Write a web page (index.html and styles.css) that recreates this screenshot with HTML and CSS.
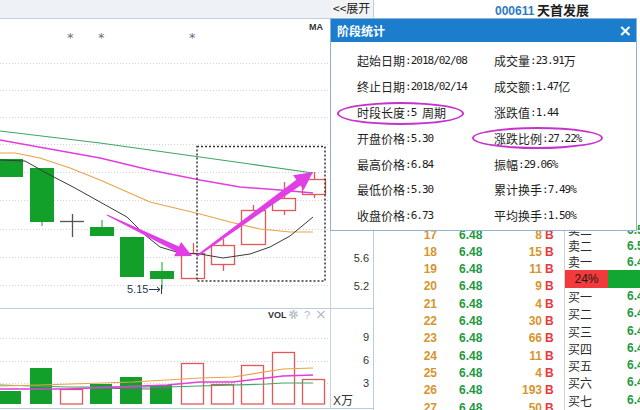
FILE: index.html
```html
<!DOCTYPE html>
<html lang="zh-CN">
<head>
<meta charset="utf-8">
<title>阶段统计</title>
<link rel="stylesheet" href="styles.css">
</head>
<body>
<div class="app">
  <div class="left">
    <div class="topbar">
      <div class="topfill"></div>
      <div class="expand">&lt;&lt;展开</div>
    </div>
    <div class="pane price">
      <div class="chart">
        <svg class="plot" width="330" height="289" viewBox="0 19 330 289">
          <g class="grid">
            <line x1="0" x2="330" y1="63.5" y2="63.5"/>
            <line x1="0" x2="330" y1="90.5" y2="90.5"/>
            <line x1="0" x2="330" y1="117.5" y2="117.5"/>
            <line x1="0" x2="330" y1="144.5" y2="144.5"/>
            <line x1="0" x2="330" y1="172.5" y2="172.5"/>
            <line x1="0" x2="330" y1="200.5" y2="200.5"/>
            <line x1="0" x2="330" y1="229.5" y2="229.5"/>
            <line x1="0" x2="330" y1="257.5" y2="257.5"/>
            <line x1="0" x2="330" y1="285.5" y2="285.5"/>
          </g>
          <g class="marks">
            <text x="67" y="42">*</text>
            <text x="98" y="42">*</text>
            <text x="189" y="42">*</text>
          </g>
          <text class="ma-label" x="309" y="30">MA</text>
          <g class="down">
            <rect x="0" y="159" width="23" height="18"/>
            <line x1="42" x2="42" y1="221" y2="226"/>
            <rect x="30" y="168" width="24" height="54"/>
            <line x1="102" x2="102" y1="220" y2="228"/>
            <rect x="90" y="227" width="24" height="9"/>
            <rect x="120" y="237" width="24" height="40"/>
            <line x1="162" x2="162" y1="262" y2="289"/>
            <rect x="150" y="271" width="24" height="8"/>
          </g>
          <g class="doji">
            <line x1="60" x2="84" y1="221.5" y2="221.5"/>
            <line x1="72.5" x2="72.5" y1="214" y2="237"/>
          </g>
          <g class="up">
            <line x1="193.5" x2="193.5" y1="243" y2="253.5"/>
            <rect x="181.5" y="253.5" width="23" height="25"/>
            <line x1="223.5" x2="223.5" y1="239" y2="245.5"/>
            <line x1="223.5" x2="223.5" y1="264.5" y2="271"/>
            <rect x="211.5" y="245.5" width="23" height="19"/>
            <line x1="253.5" x2="253.5" y1="205" y2="210.5"/>
            <rect x="241.5" y="210.5" width="24" height="34"/>
            <line x1="284.5" x2="284.5" y1="182" y2="198.5"/>
            <line x1="284.5" x2="284.5" y1="210.5" y2="215"/>
            <rect x="272.5" y="198.5" width="23" height="12"/>
            <line x1="314.5" x2="314.5" y1="172" y2="179.5"/>
            <line x1="314.5" x2="314.5" y1="194.5" y2="198"/>
            <rect x="302.5" y="179.5" width="23" height="15"/>
          </g>
          <polyline class="ma ma-green" points="0,131 50,137 100,143 150,150 200,157 250,164 313,173"/>
          <polyline class="ma ma-pink" points="0,140 50,149 100,158 150,170 200,180 240,187 280,190 313,193"/>
          <polyline class="ma ma-orange" points="0,153 15,153 40,158 70,168 100,180 150,202 200,214 230,222 260,229 290,232 313,232"/>
          <polyline class="ma ma-black" points="0,160 25,161 50,175 75,188 100,202 127,217 145,235 160,247 180,253 200,254 223,258 250,254 270,247 290,236 313,217"/>
          <rect class="range" x="197" y="146.5" width="128" height="134.5"/>
          <polygon class="arrow" points="107.2,214.5 178.9,246.4 181.1,241.9 192,256 174.1,256.3 176.3,251.8 106.8,215.5"/>
          <polygon class="arrow" points="197.5,256.7 300.5,185.4 303.7,189.9 313,172 293.1,175.3 296.4,179.8 196.5,255.3"/>
          <text class="low" x="127" y="293">5.15</text>
          <line class="low-arrow" x1="149" x2="160" y1="289.5" y2="289.5"/>
          <polyline class="low-arrow" points="157,287 160,289.5 157,292"/>
          <line class="low-arrow" x1="161.5" x2="161.5" y1="285" y2="294"/>
        </svg>
      </div>
      <div class="axis axis-price">
        <span>5.6</span>
        <span>5.2</span>
      </div>
    </div>
    <div class="pane vol">
      <div class="chart">
        <svg class="plot" width="330" height="99" viewBox="0 309 330 99">
          <g class="grid">
            <line x1="0" x2="330" y1="338.5" y2="338.5"/>
            <line x1="0" x2="330" y1="361.5" y2="361.5"/>
            <line x1="0" x2="330" y1="383.5" y2="383.5"/>
          </g>
          <text class="vol-label" x="268" y="318">VOL</text>
          <g class="tool">
            <circle class="gear" cx="293.5" cy="314.5" r="3.2"/>
            <circle class="gear-hub" cx="293.5" cy="314.5" r="2.2"/>
            <circle class="gear-eye" cx="293.5" cy="314.5" r="0.9"/>
            <text x="304" y="318.5">?</text>
            <path class="tool-x" d="M317.5 311 L324.5 318 M324.5 311 L317.5 318"/>
          </g>
          <g class="down">
            <rect x="0" y="391" width="21" height="13"/>
            <rect x="30" y="368" width="22" height="36"/>
            <rect x="90" y="384" width="22" height="20"/>
            <rect x="120" y="377" width="22" height="27"/>
            <rect x="150" y="385" width="22" height="19"/>
          </g>
          <g class="up">
            <rect x="60.5" y="389.5" width="22" height="14.5"/>
            <rect x="181.5" y="363.5" width="22" height="40.5"/>
            <rect x="211.5" y="384.5" width="22" height="19.5"/>
            <rect x="241.5" y="365.5" width="22" height="38.5"/>
            <rect x="272.5" y="352.5" width="22" height="51.5"/>
            <rect x="302.5" y="379.5" width="22" height="24.5"/>
          </g>
          <polyline class="ma ma-grey" points="90,388 120,388.5 150,389 170,388"/>
          <polyline class="ma ma-green" points="0,385 67,387 167,387 200,386 267,384 283,383 313,383"/>
          <polyline class="ma ma-pink" points="0,389 67,389 167,385 200,382 233,382 283,376 313,375"/>
          <polyline class="ma ma-orange" points="0,386 40,385 133,382 200,378 233,377 283,369 313,368"/>
        </svg>
      </div>
      <div class="axis axis-vol">
        <span>9</span>
        <span>6</span>
        <span>3</span>
        <span class="unit">X万</span>
      </div>
    </div>
  </div>

  <div class="right">
    <div class="title"><b class="code">000611</b> <b class="name">天首发展</b></div>
    <div class="body">
      <div class="ticks">
        <div class="tick"><span class="i">17</span><span class="p">6.48</span><span class="v">8</span><span class="b">B</span></div>
        <div class="tick"><span class="i">18</span><span class="p">6.48</span><span class="v">15</span><span class="b">B</span></div>
        <div class="tick"><span class="i">19</span><span class="p">6.48</span><span class="v">11</span><span class="b">B</span></div>
        <div class="tick"><span class="i">20</span><span class="p">6.48</span><span class="v">9</span><span class="b">B</span></div>
        <div class="tick"><span class="i">21</span><span class="p">6.48</span><span class="v">4</span><span class="b">B</span></div>
        <div class="tick"><span class="i">22</span><span class="p">6.48</span><span class="v">30</span><span class="b">B</span></div>
        <div class="tick"><span class="i">23</span><span class="p">6.48</span><span class="v">66</span><span class="b">B</span></div>
        <div class="tick"><span class="i">24</span><span class="p">6.48</span><span class="v">11</span><span class="b">B</span></div>
        <div class="tick"><span class="i">25</span><span class="p">6.48</span><span class="v">4</span><span class="b">B</span></div>
        <div class="tick"><span class="i">26</span><span class="p">6.48</span><span class="v">193</span><span class="b">B</span></div>
        <div class="tick"><span class="i">27</span><span class="p">6.48</span><span class="v">50</span><span class="b">B</span></div>
      </div>
      <div class="book">
        <div class="sells">
          <div class="lvl"><span class="lab">卖三</span><span class="pr">6.51</span></div>
          <div class="lvl"><span class="lab">卖二</span><span class="pr">6.50</span></div>
          <div class="lvl"><span class="lab">卖一</span><span class="pr">6.49</span></div>
        </div>
        <div class="ratio"><span class="bid">24%</span><span class="ask"></span></div>
        <div class="buys">
          <div class="lvl"><span class="lab">买一</span><span class="pr">6.48</span></div>
          <div class="lvl"><span class="lab">买二</span><span class="pr">6.47</span></div>
          <div class="lvl"><span class="lab">买三</span><span class="pr">6.46</span></div>
          <div class="lvl"><span class="lab">买四</span><span class="pr">6.45</span></div>
          <div class="lvl"><span class="lab">买五</span><span class="pr">6.44</span></div>
          <div class="lvl"><span class="lab">买六</span><span class="pr">6.43</span></div>
          <div class="lvl"><span class="lab">买七</span><span class="pr">6.42</span></div>
        </div>
      </div>
    </div>
  </div>

  <div class="dialog">
    <div class="dlg-title"><span>阶段统计</span><span class="close">×</span></div>
    <div class="dlg-body">
      <div class="stat"><span class="k">起始日期</span><span class="n">:2018/02/08</span></div>
      <div class="stat"><span class="k">成交量</span><span class="n">:23.91</span><span class="k">万</span></div>
      <div class="stat"><span class="k">终止日期</span><span class="n">:2018/02/14</span></div>
      <div class="stat"><span class="k">成交额</span><span class="n">:1.47</span><span class="k">亿</span></div>
      <div class="stat"><span class="k">时段长度</span><span class="n">:5 </span><span class="k">周期</span></div>
      <div class="stat"><span class="k">涨跌值</span><span class="n">:1.44</span></div>
      <div class="stat"><span class="k">开盘价格</span><span class="n">:5.30</span></div>
      <div class="stat"><span class="k">涨跌比例</span><span class="n">:27.22%</span></div>
      <div class="stat"><span class="k">最高价格</span><span class="n">:6.84</span></div>
      <div class="stat"><span class="k">振幅</span><span class="n">:29.06%</span></div>
      <div class="stat"><span class="k">最低价格</span><span class="n">:5.30</span></div>
      <div class="stat"><span class="k">累计换手</span><span class="n">:7.49%</span></div>
      <div class="stat"><span class="k">收盘价格</span><span class="n">:6.73</span></div>
      <div class="stat"><span class="k">平均换手</span><span class="n">:1.50%</span></div>
      <div class="ring ring-a"></div>
      <div class="ring ring-b"></div>
    </div>
  </div>
</div>
</body>
</html>
```
FILE: styles.css
```css
* { box-sizing: border-box; }
html, body { margin: 0; padding: 0; background: #fff; }
body {
  font-family: "Noto Sans CJK SC", "Liberation Sans", sans-serif;
  font-size: 12px;
  color: #222;
}
.app {
  position: relative;
  width: 640px;
  height: 410px;
  overflow: hidden;
  display: flex;
  background: #fff;
}

/* ---------- left: charts ---------- */
.left {
  width: 374px;
  flex: none;
  border-right: 1px solid #b9cddd;
  display: flex;
  flex-direction: column;
}
.topbar {
  height: 19px;
  display: flex;
  border-bottom: 1px solid #c3ced8;
  background: #eef1f5;
}
.topfill { width: 331px; }
.expand {
  flex: 1;
  font-size: 12px;
  line-height: 16px;
  color: #222;
  padding-left: 2px;
  background: #f2f3f5;
}
.pane { display: flex; }
.pane.price { height: 290px; border-bottom: 1px solid #b9cddd; }
.pane.vol { height: 100px; border-bottom: 1px solid #b9cddd; }
.chart {
  width: 331px;
  flex: none;
  border-right: 1px solid #c4d6e4;
}
.plot { display: block; }
.axis {
  flex: 1;
  display: flex;
  flex-direction: column;
  font-family: "Liberation Sans", sans-serif;
  font-size: 11px;
  color: #333;
}
.axis span { text-align: right; padding-right: 4px; }
.axis-price { justify-content: flex-end; padding-bottom: 8px; }
.axis-price span { line-height: 28px; }
.axis-vol { padding-top: 17px; }
.axis-vol span { line-height: 23px; }
.axis-vol .unit {
  text-align: left;
  padding-left: 2px;
  line-height: 13px;
  font-family: "Liberation Sans", "Noto Sans CJK SC", sans-serif;
  font-size: 12px;
}

/* svg parts */
.grid line { stroke: #cfd3d8; stroke-width: 1; stroke-dasharray: 1 2; }
.marks text { font-family: "DejaVu Sans", sans-serif; font-size: 13px; fill: #6a7078; }
.ma-label { font-family: "Liberation Sans", sans-serif; font-size: 9px; font-weight: bold; fill: #333; }
.down rect { fill: #12a02a; }
.down line { stroke: #12a02a; stroke-width: 1; }
.doji line { stroke: #555; stroke-width: 1.3; }
.up rect { fill: #fff; stroke: #e05858; stroke-width: 1.3; }
.up line { stroke: #e05858; stroke-width: 1.3; }
.ma { fill: none; stroke-width: 1.2; }
.ma-green { stroke: #3fa667; }
.ma-pink { stroke: #e03ee0; stroke-width: 1.5; }
.ma-orange { stroke: #eba248; }
.ma-black { stroke: #3a3a3a; stroke-width: 1; }
.ma-grey { stroke: #6c6c78; }
.range { fill: none; stroke: #333; stroke-width: 1.5; stroke-dasharray: 2 2; }
.arrow { fill: #e23ee6; }
.low { font-family: "Liberation Sans", sans-serif; font-size: 11px; fill: #2a3550; }
.low-arrow { fill: none; stroke: #2a3550; stroke-width: 1; }
.vol-label { font-family: "Liberation Sans", sans-serif; font-size: 9px; font-weight: bold; fill: #333; }
.gear { fill: none; stroke: #b4bcc6; stroke-width: 2.4; stroke-dasharray: 1.7 1.1; }
.gear-hub { fill: #b4bcc6; }
.gear-eye { fill: #fff; }
.tool text { font-family: "Liberation Sans", sans-serif; font-size: 11px; fill: #b4bcc6; }
.tool-x { stroke: #b4bcc6; stroke-width: 1.2; fill: none; }

/* ---------- right: ticks and book ---------- */
.right {
  flex: 1;
  display: flex;
  flex-direction: column;
  min-width: 0;
}
.title {
  height: 18px;
  padding: 1px 0 0 121px;
  line-height: 17px;
  white-space: nowrap;
}
.code { font-family: "Liberation Sans", sans-serif; font-size: 12px; color: #2c7cc2; }
.name { font-size: 13px; color: #1e1e1e; }
.body {
  flex: 1;
  display: flex;
  min-height: 0;
}
.ticks {
  width: 191px;
  flex: none;
  border-right: 1px solid #c9d3dc;
  padding-top: 208.6px;
  font-family: "Liberation Sans", sans-serif;
  font-size: 12px;
  font-weight: bold;
}
.tick { display: flex; height: 17.3px; line-height: 17.3px; }
.tick .i { width: 63px; text-align: right; color: #d6952e; }
.tick .p { width: 40px; margin-left: 22px; color: #1e9a3e; }
.tick .v { width: 43px; text-align: right; color: #d6952e; }
.tick .b { margin-left: 3px; color: #e8383c; }
.book {
  flex: 1;
  display: flex;
  flex-direction: column;
  min-width: 0;
}
.sells {
  flex: 1;
  display: flex;
  flex-direction: column;
  justify-content: flex-end;
  overflow: hidden;
}
.sells .lvl { height: 16px; line-height: 16px; }
.buys { height: 122px; flex: none; }
.buys .lvl { height: 17.3px; line-height: 17.3px; }
.lvl { display: flex; white-space: nowrap; padding-left: 3px; }
.lvl .lab { width: 59px; flex: none; font-size: 12px; color: #2a2a2a; }
.lvl .pr {
  font-family: "Liberation Sans", sans-serif;
  font-weight: bold;
  font-size: 12px;
  color: #1e9a3e;
}
.ratio { height: 18px; flex: none; display: flex; }
.ratio .bid {
  width: 43px;
  background: #f23a3c;
  color: #1a1a1a;
  font-family: "Liberation Sans", sans-serif;
  font-size: 12px;
  line-height: 18px;
  text-align: center;
}
.ratio .ask { flex: 1; background: #12a632; }

/* ---------- dialog ---------- */
.dialog {
  position: absolute;
  left: 330px;
  top: 18px;
  width: 307px;
  height: 213px;
  border: 1px solid #8fb3d6;
  background: #fff;
  display: flex;
  flex-direction: column;
}
.dlg-title {
  height: 23px;
  flex: none;
  background: #1b7dcc;
  color: #fff;
  font-weight: bold;
  font-size: 12px;
  display: flex;
  align-items: center;
  justify-content: space-between;
  padding: 0 4px 0 6px;
}
.dlg-title .close { font-family: "DejaVu Sans", sans-serif; font-size: 16px; font-weight: bold; line-height: 16px; }
.dlg-body {
  position: relative;
  flex: 1;
  display: grid;
  grid-template-columns: 137px 1fr;
  grid-auto-rows: 25.8px;
  padding: 6px 0 0 26px;
}
.stat { display: flex; align-items: center; white-space: nowrap; color: #1e1e1e; }
.stat .k { font-size: 12px; }
.stat .n {
  font-family: "DejaVu Sans Mono", monospace;
  font-size: 11px;
  letter-spacing: -1px;
  white-space: pre;
}
.ring {
  position: absolute;
  border: 2px solid #c433cc;
  border-radius: 50%;
}
.ring-a { left: 6px; top: 60px; width: 127px; height: 23px; }
.ring-b { left: 141px; top: 85px; width: 131px; height: 22px; }
```
